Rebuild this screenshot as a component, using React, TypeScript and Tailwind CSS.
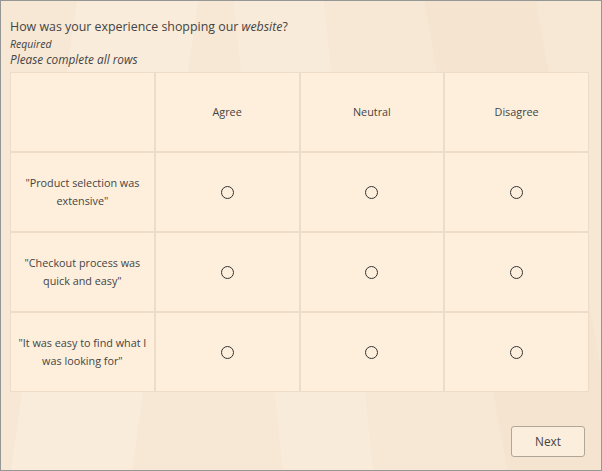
const columns = ["Agree", "Neutral", "Disagree"];

const rows = [
  ['"Product selection was', 'extensive"'],
  ['"Checkout process was', 'quick and easy"'],
  ['"It was easy to find what I', 'was looking for"'],
];

function Radio() {
  return <span className="block h-[13px] w-[13px] rounded-full border-[1.5px] border-[#333]" />;
}

export default function App() {
  return (
    <div
      className="relative h-[471px] w-[602px] overflow-hidden border border-[#969696] bg-[#f7e8d5] text-[#444]"
      style={{ fontFamily: '"Open Sans", sans-serif' }}
    >
      {/* soft background streaks */}
      <div className="pointer-events-none absolute inset-0">
        <div className="absolute left-[40px] top-[-40px] h-[600px] w-[120px] rotate-[8deg] bg-[#fbeedd]/60" />
        <div className="absolute left-[260px] top-[-40px] h-[600px] w-[90px] rotate-[-6deg] bg-[#fbeedd]/50" />
        <div className="absolute left-[470px] top-[-40px] h-[600px] w-[110px] rotate-[-10deg] bg-[#f3e2cd]/60" />
      </div>

      <div className="relative px-[9px] pt-[16px]">
        <h1 className="text-[12.4px] leading-[20px]">
          How was your experience shopping our <em>website</em>?
        </h1>
        <p className="text-[10.5px] italic leading-[14px]">Required</p>
        <p className="text-[11.8px] italic leading-[17px]">Please complete all rows</p>

        <div className="mt-[4px] grid w-[579px] grid-cols-4 gap-[2px] border border-[#efdcc6] bg-[#efdcc6]">
          <div className="h-[78px] bg-[#fdefdc]" />
          {columns.map((c) => (
            <div key={c} className="flex h-[78px] items-center justify-center bg-[#fdefdc] text-[10.8px]">
              {c}
            </div>
          ))}
          {rows.map((r) => (
            <>
              <div
                key={r[0]}
                className="flex h-[78px] flex-col items-center justify-center bg-[#fdefdc] text-center text-[10.8px] leading-[18px]"
              >
                <span>{r[0]}</span>
                <span>{r[1]}</span>
              </div>
              {columns.map((c) => (
                <div key={r[0] + c} className="flex h-[78px] items-center justify-center bg-[#fdefdc]">
                  <Radio />
                </div>
              ))}
            </>
          ))}
        </div>

        <div className="mt-[34px] flex justify-end pr-[7px]">
          <button className="h-[31px] w-[74px] rounded-[3px] border border-[#b2a696] bg-[#fbeedd] text-[11.8px] text-[#444]">
            Next
          </button>
        </div>
      </div>
    </div>
  );
}
